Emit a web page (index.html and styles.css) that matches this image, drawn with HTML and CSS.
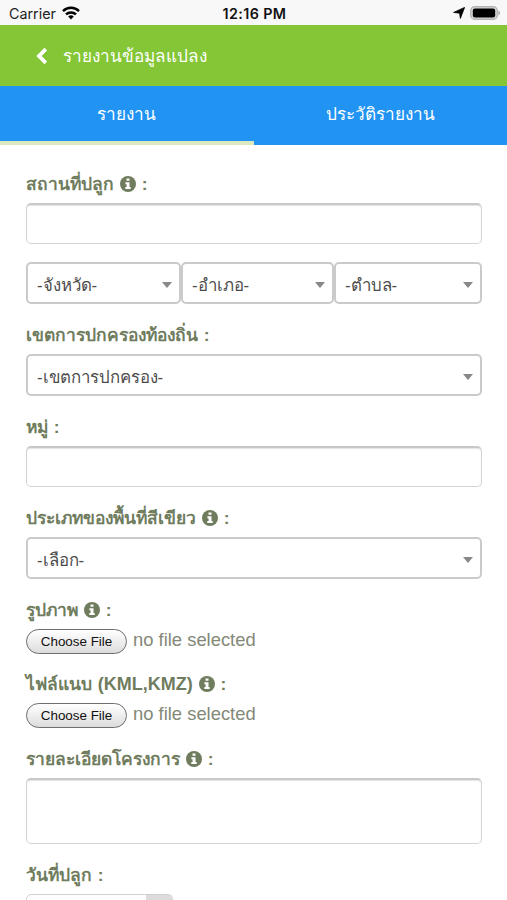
FILE: index.html
```html
<!DOCTYPE html>
<html lang="th">
<head>
  <meta charset="UTF-8" />
  <meta name="viewport" content="width=device-width, initial-scale=1.0">
  <title>รายงานข้อมูลแปลง</title>
  <link rel="stylesheet" href="styles.css">
</head>
<body>
  <!-- info icon -->
  <svg class="defs" width="0" height="0">
    <symbol id="info" viewBox="0 0 16 16">
      <circle cx="8" cy="8" r="8" fill="#6f7c5d"/>
      <path d="M6.5 2.4h3v2.4h-3zM5.4 6.2h4.1v4.9h1.2v2H5.3v-2h1.3V8.2H5.4z" fill="#fff"/>
    </symbol>
  </svg>

  <div class="status">
    <div class="carrier">
      <span>Carrier</span>
      <svg width="18" height="14" viewBox="0 0 18 14">
        <g fill="none" stroke="#000" stroke-width="2.5">
          <path d="M1 5.1a11.5 11.5 0 0 1 16 0"/>
          <path d="M4 8.4a7.3 7.3 0 0 1 10 0"/>
        </g>
        <path d="M6.2 10.6a4.2 4.2 0 0 1 5.6 0L9 13.6z"/>
      </svg>
    </div>
    <div class="time">12:16 PM</div>
    <div class="power">
      <svg width="12" height="12" viewBox="0 0 12 12"><path d="M11.6.4L7.4 11.4 6.6 6.2.6 5.4z" stroke="#000" stroke-width=".8" stroke-linejoin="round"/></svg>
      <svg width="30" height="14" viewBox="0 0 30 14">
        <rect x=".8" y=".8" width="26.4" height="12.4" rx="3.8" fill="#ddd" stroke="#b4b4b4" stroke-width="1.4"/>
        <rect x="2.8" y="2.4" width="22.4" height="9.2" rx="2"/>
        <path d="M28.4 4.6q1.6.8 1.6 2.4t-1.6 2.4z" fill="#aaa"/>
      </svg>
    </div>
  </div>

  <header>
    <svg class="back" width="12" height="18" viewBox="0 0 12 18"><path d="M9.8 2.2L3 9l6.8 6.8" fill="none" stroke="#fff" stroke-width="3.8"/></svg>
    <h1>รายงานข้อมูลแปลง</h1>
  </header>

  <nav class="tabs">
    <a class="tab active">รายงาน</a>
    <a class="tab">ประวัติรายงาน</a>
  </nav>

  <form class="form">
    <div class="field place">
      <label>สถานที่ปลูก <svg class="info"><use href="#info"/></svg> :</label>
      <div class="input"></div>
    </div>
    <div class="field row">
      <div class="select"><span>-จังหวัด-</span></div>
      <div class="select"><span>-อำเภอ-</span></div>
      <div class="select"><span>-ตำบล-</span></div>
    </div>
    <div class="field">
      <label>เขตการปกครองท้องถิ่น :</label>
      <div class="select"><span>-เขตการปกครอง-</span></div>
    </div>
    <div class="field">
      <label>หมู่ :</label>
      <div class="input"></div>
    </div>
    <div class="field">
      <label>ประเภทของพื้นที่สีเขียว <svg class="info"><use href="#info"/></svg> :</label>
      <div class="select"><span>-เลือก-</span></div>
    </div>
    <div class="field file">
      <label>รูปภาพ <svg class="info"><use href="#info"/></svg> :</label>
      <div class="picker"><button type="button">Choose File</button><span>no file selected</span></div>
    </div>
    <div class="field file">
      <label>ไฟล์แนบ <span class="latin">(KML,KMZ)</span> <svg class="info"><use href="#info"/></svg> :</label>
      <div class="picker"><button type="button">Choose File</button><span>no file selected</span></div>
    </div>
    <div class="field detail">
      <label>รายละเอียดโครงการ <svg class="info"><use href="#info"/></svg> :</label>
      <div class="input area"></div>
    </div>
    <div class="field">
      <label>วันที่ปลูก :</label>
      <div class="date"><div class="date-btn"></div></div>
    </div>
  </form>
</body>
</html>
```

FILE: styles.css
```css
* {
  box-sizing: border-box;
}
body {
  margin: 0;
  height: 900px;
  overflow: hidden;
  background: #fff;
  font-family: "Liberation Sans", sans-serif;
  font-size: 17.2px;
}
.defs {
  display: block;
}
.status {
  display: grid;
  grid-template-columns: 1fr auto 1fr;
  align-items: center;
  height: 25px;
  padding: 2px 7px 0 9px;
  background: #f8f8f8;
  font-family: Inter, sans-serif;
  font-size: 14px;
  color: #222;
}
.carrier {
  display: flex;
  align-items: center;
  gap: 6px;
  font-size: 14.3px;
}
.carrier svg {
  position: relative;
  top: -1px;
}
.time {
  font-weight: 600;
  font-size: 14.3px;
  letter-spacing: 0.4px;
  color: #111;
}
.power {
  display: flex;
  align-items: center;
  justify-content: flex-end;
  gap: 5px;
  padding-bottom: 1px;
}
header {
  display: flex;
  align-items: center;
  height: 61px;
  padding-left: 36px;
  background: #84c636;
  color: #fff;
}
header h1 {
  margin: 0 0 0 15px;
  font-size: 17.2px;
  font-weight: normal;
}
.tabs {
  display: flex;
  height: 59px;
  background: #2194f3;
}
.tab {
  flex: 1;
  text-align: center;
  line-height: 56px;
  color: #fff;
  border-bottom: 4px solid transparent;
}
.tab.active {
  border-bottom-color: #dcebbd;
}
.form {
  height: 755px;
  overflow: hidden;
  padding: 27px 25px 0 26px;
  color: #6f7c5d;
}
.field {
  margin-bottom: 19px;
}
.place, .file {
  margin-bottom: 18px;
}
.file + .detail {
  margin-top: 19px;
}
label {
  display: block;
  height: 31px;
  line-height: 24px;
  font-size: 17.4px;
  font-weight: bold;
  word-spacing: 1px;
  white-space: nowrap;
}
.file label {
  height: 30px;
}
.latin {
  font-size: 18px;
}
.info {
  width: 16px;
  height: 16px;
  vertical-align: -2px;
}
.input {
  height: 41px;
  border: 1px solid #d4d4d4;
  border-top: 2px solid #c8c8c8;
  border-radius: 5px;
  box-shadow: inset 0 1px 1px #e4e4e4;
}
.area {
  height: 66px;
}
.row {
  display: grid;
  grid-template-columns: 155px 153px 1fr;
}
.select {
  display: flex;
  align-items: center;
  justify-content: space-between;
  height: 42px;
  padding: 3px 7px 0 9px;
  border: 2px solid #cacaca;
  border-radius: 5px;
  font-size: 16.8px;
  color: #4c4c4c;
}
/* dropdown arrow */
.select::after {
  content: "";
  border: 5px solid transparent;
  border-top: 6px solid #888;
  border-bottom: 0;
}
.picker {
  display: flex;
  align-items: center;
  height: 26px;
  gap: 6px;
  font-size: 18.4px;
  color: #838878;
}
.picker span {
  line-height: 22px;
  padding-bottom: 2px;
}
.picker button {
  width: 101px;
  height: 25px;
  padding: 0;
  border: 1.5px solid #6e6e6e;
  border-radius: 13px;
  background: linear-gradient(#fff, #f0f0f0 45%, #dcdcdc);
  font-family: "Liberation Sans", sans-serif;
  font-size: 13.4px;
  color: #111;
}
.date {
  display: flex;
  justify-content: flex-end;
  width: 147px;
  height: 41px;
  border: 1px solid #d0d0d0;
  border-radius: 5px;
}
.date-btn {
  width: 26px;
  background: #dcdcdc;
}
```
